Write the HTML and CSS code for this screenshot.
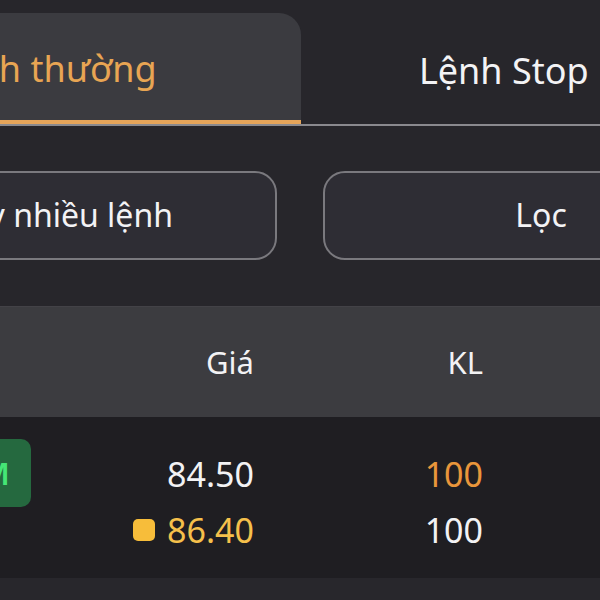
FILE: index.html
```html
<!DOCTYPE html>
<html lang="vi">
<head>
<meta charset="utf-8">
<title>Sổ lệnh</title>
<link rel="stylesheet" href="styles.css">
</head>
<body>
<div class="screen">
  <div class="tabs">
    <div class="tab tab-active">Lệnh thường</div>
    <div class="tab">Lệnh Stop Loss</div>
  </div>
  <div class="actions">
    <button class="btn">Hủy nhiều lệnh</button>
    <button class="btn">Lọc</button>
  </div>
  <div class="table">
    <div class="trow thead">
      <div></div>
      <div class="num">Giá</div>
      <div class="num">KL</div>
      <div></div>
    </div>
    <div class="trow tbody">
      <div><span class="badge">M</span></div>
      <div class="num cell">
        <div class="line">84.50</div>
        <div class="line yellow"><span class="dot"></span>86.40</div>
      </div>
      <div class="num cell">
        <div class="line orange">100</div>
        <div class="line">100</div>
      </div>
      <div></div>
    </div>
  </div>
</div>
</body>
</html>
```
FILE: styles.css
```css
html, body {
  margin: 0;
  padding: 0;
}
body {
  background: #28272c;
  font-family: "Noto Sans", "Open Sans", sans-serif;
  color: #f2f2f4;
  overflow: hidden;
  width: 600px;
  height: 600px;
}
.screen {
  width: 1000px;
  margin-left: -199px;
  padding-top: 13px;
  background: #27262b;
}
.tabs {
  display: flex;
  border-bottom: 2px solid #8a898e;
}
.tab {
  width: 500px;
  height: 111px;
  box-sizing: border-box;
  display: flex;
  align-items: center;
  justify-content: center;
  font-size: 36px;
  color: #f3f3f5;
  padding: 4px 10px 0 0;
}
.tab-active {
  background: #3b3b40;
  color: #e8a553;
  border-top-right-radius: 22px;
  border-bottom: 4px solid #e5a45a;
  padding-right: 8px;
}
.actions {
  display: grid;
  grid-template-columns: 436px 436px;
  gap: 46px;
  padding: 45px 42px 46px 40px;
}
.btn {
  height: 89px;
  border: 2px solid #7a797e;
  border-radius: 22px;
  background: #2e2d34;
  color: #f3f3f5;
  font-family: inherit;
  font-size: 32px;
  padding: 0 0 2px;
}
.trow {
  display: grid;
  grid-template-columns: 71px 223px 229px 1fr;
  padding-left: 159px;
}
.thead {
  height: 111px;
  align-items: center;
  background: #3c3c40;
  font-size: 31px;
  border-top: 1px solid #434247;
  box-sizing: border-box;
}
.num {
  text-align: right;
}
.tbody {
  background: #1f1e22;
  padding-top: 22px;
  padding-bottom: 20px;
  font-size: 34px;
}
.badge {
  display: flex;
  align-items: center;
  justify-content: center;
  width: 71px;
  height: 68px;
  border-radius: 10px;
  background: #25693f;
  color: #45e676;
  font-size: 31px;
  font-weight: 600;
}
.cell {
  padding-top: 7px;
}
.line {
  height: 56px;
  line-height: 56px;
  display: flex;
  align-items: center;
  justify-content: flex-end;
}
.yellow {
  color: #f5c04b;
}
.orange {
  color: #e9963b;
}
.dot {
  width: 22px;
  height: 22px;
  border-radius: 5px;
  background: #f7bd3a;
  margin-right: 12px;
}
```
